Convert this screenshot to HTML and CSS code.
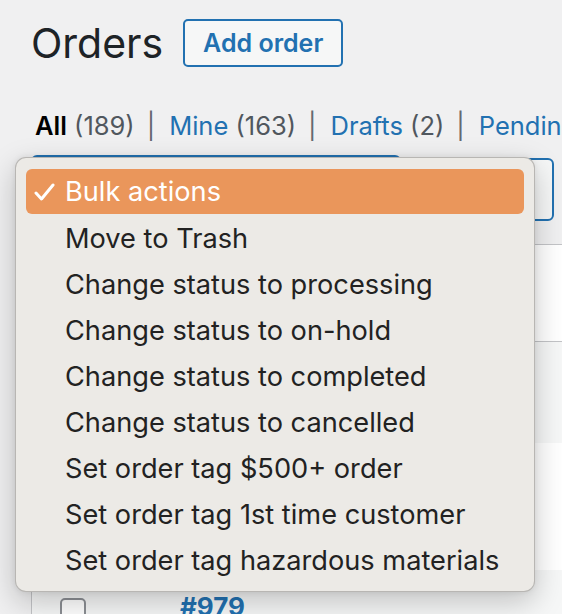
FILE: index.html
```html
<!DOCTYPE html>
<html lang="en">
<head>
<meta charset="utf-8">
<title>Orders</title>
<link rel="stylesheet" href="styles.css">
</head>
<body>
<div class="wrap">
  <div class="heading">
    <h1 class="title">Orders</h1>
    <a class="add-btn">Add order</a>
  </div>
  <ul class="subsubsub">
    <li><b class="current">All</b> <span class="count">(189)</span><span class="sep">|</span></li>
    <li><a>Mine</a> <span class="count">(163)</span><span class="sep">|</span></li>
    <li><a>Drafts</a> <span class="count">(2)</span><span class="sep">|</span></li>
    <li><a>Pending payment</a> <span class="count">(14)</span></li>
  </ul>
  <div class="tablenav">
    <div class="select-box">Bulk actions</div>
    <div class="apply-btn">Apply</div>
  </div>
  <div class="table">
    <div class="thead"></div>
    <div class="row alt"></div>
    <div class="row"></div>
    <div class="row alt">
      <span class="checkbox"></span>
      <span class="order-no">#979</span>
    </div>
  </div>
</div>

<div class="menu">
  <div class="item selected">
    <svg class="check" width="22" height="20" viewBox="0 0 22 20"><path d="M3 11 L8.5 17 L20 3" fill="none" stroke="#fff" stroke-width="3" stroke-linecap="round" stroke-linejoin="round"/></svg>
    <span>Bulk actions</span>
  </div>
  <div class="item"><span>Move to Trash</span></div>
  <div class="item"><span>Change status to processing</span></div>
  <div class="item"><span>Change status to on-hold</span></div>
  <div class="item"><span>Change status to completed</span></div>
  <div class="item"><span>Change status to cancelled</span></div>
  <div class="item"><span>Set order tag $500+ order</span></div>
  <div class="item"><span>Set order tag 1st time customer</span></div>
  <div class="item"><span>Set order tag hazardous materials</span></div>
</div>
</body>
</html>
```

FILE: styles.css
```css
html, body {
  margin: 0;
  padding: 0;
}
body {
  background: #f0f0f1;
  font-family: Inter, "Liberation Sans", Arial, sans-serif;
  color: #1d2327;
  width: 562px;
  height: 614px;
  overflow: hidden;
  position: relative;
}
.wrap {
  padding-left: 31px;
  padding-top: 19px;
}
.heading {
  display: flex;
  align-items: center;
  gap: 20px;
  height: 48px;
}
.title {
  margin: 0;
  font-size: 41px;
  font-weight: 400;
  line-height: 48px;
  color: #1d2327;
}
.add-btn {
  box-sizing: border-box;
  height: 48px;
  width: 160px;
  border: 2px solid #2271b1;
  border-radius: 5px;
  background: #f6f7f7;
  color: #2271b1;
  font-size: 25px;
  font-weight: 600;
  display: flex;
  align-items: center;
  justify-content: center;
}
.subsubsub {
  list-style: none;
  margin: 0;
  padding: 0 0 0 4px;
  margin-top: 42px;
  display: flex;
  white-space: nowrap;
  font-size: 25.5px;
  line-height: 34px;
  height: 34px;
}
.current {
  color: #000;
  font-weight: 600;
}
.subsubsub a {
  color: #2271b1;
}
.count {
  color: #50575e;
}
.sep {
  display: inline-block;
  color: #646970;
  margin: 0 14px 0 12px;
}
.tablenav {
  display: flex;
  margin-top: 12px;
  height: 89px;
}
.select-box {
  box-sizing: border-box;
  width: 370px;
  height: 60px;
  border: 2px solid #2271b1;
  border-radius: 6px;
  background: #fff;
  font-size: 26px;
  padding: 12px 16px;
}
.apply-btn {
  box-sizing: border-box;
  margin-left: 40px;
  margin-top: 3px;
  width: 113px;
  height: 63px;
  border: 2px solid #2271b1;
  border-radius: 6px;
  background: #f6f7f7;
  color: #2271b1;
  font-size: 26px;
  padding: 14px 16px;
}
.table {
  border-top: 1px solid #c3c4c7;
  border-left: 1px solid #c3c4c7;
  background: #fff;
  margin-right: -20px;
}
.thead {
  height: 96px;
  border-bottom: 1px solid #c3c4c7;
  background: #fff;
}
.row {
  height: 101px;
  background: #fff;
}
.row + .row {
  height: 127px;
}
.row.alt {
  background: #f6f7f7;
}
.row:last-child {
  height: 100px;
  position: relative;
}
.checkbox {
  position: absolute;
  left: 28px;
  top: 28px;
  box-sizing: border-box;
  width: 26px;
  height: 26px;
  border: 2px solid #8c8f94;
  border-radius: 5px;
  background: #fff;
}
.order-no {
  position: absolute;
  left: 148px;
  top: 21px;
  font-size: 26px;
  font-weight: 700;
  color: #2271b1;
}

/* native-style dropdown menu overlay */
.menu {
  position: absolute;
  left: 15px;
  top: 157px;
  width: 520px;
  height: 435px;
  box-sizing: border-box;
  padding: 11px 10px 10px;
  background: #eceae6;
  border: 1px solid rgba(0, 0, 0, 0.22);
  border-radius: 11px;
  box-shadow: 0 10px 30px rgba(0, 0, 0, 0.22), 0 0 6px rgba(0, 0, 0, 0.08);
}
.item {
  display: flex;
  align-items: center;
  height: 46px;
  padding-left: 39px;
  font-size: 27.2px;
  color: #222222;
  border-radius: 6px;
  position: relative;
  white-space: nowrap;
}
.item.selected {
  background: #ea965b;
  color: #fff;
  height: 45px;
  margin-bottom: 1px;
}
.check {
  position: absolute;
  left: 7px;
  top: 13px;
}
```
